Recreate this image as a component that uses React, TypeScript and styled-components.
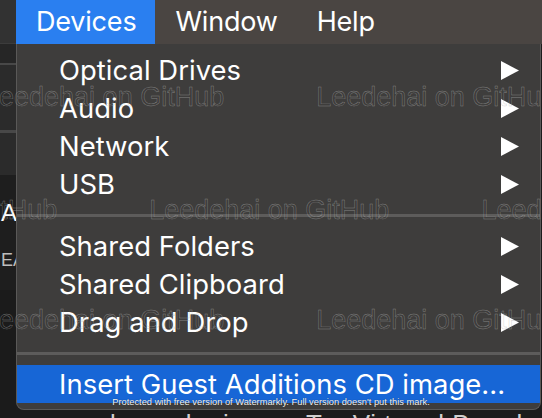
import React from "react";
import styled, { createGlobalStyle } from "styled-components";

const Global = createGlobalStyle`
  html, body { margin: 0; padding: 0; background: #1c1c1c; }
  body { width: 542px; height: 418px; overflow: hidden; }
`;

const Page = styled.div`
  position: relative;
  width: 542px;
  height: 418px;
  overflow: hidden;
  display: grid;
  grid-template-columns: 16px 525px 1px;
  grid-template-rows: 44px 366px 1fr;
  background: #1c1c1c;
  font-family: Inter, "Noto Sans", sans-serif;
`;

const SideTop = styled.div`
  grid-column: 1;
  grid-row: 1;
  background: #323232;
  border-bottom: 1px solid #3c3c3c;
  box-sizing: border-box;
`;

const MenuBar = styled.nav`
  grid-column: 2 / -1;
  grid-row: 1;
  display: flex;
  align-items: stretch;
  background: #4a4542;
`;

const BarItem = styled.div<{ $active?: boolean }>`
  padding: 0 19px 0 20px;
  line-height: 44px;
  font-size: 27px;
  color: #ffffff;
  background: ${(p) => (p.$active ? "#2a7ff0" : "transparent")};
  letter-spacing: -0.2px;
`;

const SideStrip = styled.div`
  grid-column: 1;
  grid-row: 2;
  display: flex;
  flex-direction: column;
  overflow: hidden;
`;

const SideBlock = styled.div<{ $h: number; $bg: string }>`
  flex: 0 0 ${(p) => p.$h}px;
  background: ${(p) => p.$bg};
  position: relative;
  overflow: hidden;
`;

const SideLetter = styled.div<{ $size: number; $color: string; $pad: number }>`
  padding-top: ${(p) => p.$pad}px;
  padding-left: 1px;
  font-family: "Liberation Sans", Arial, sans-serif;
  font-size: ${(p) => p.$size}px;
  line-height: 1;
  color: ${(p) => p.$color};
  white-space: nowrap;
`;

const RightEdge = styled.div`
  grid-column: 3;
  grid-row: 2;
  background: #1c1c1c;
`;

const Dropdown = styled.div`
  grid-column: 2;
  grid-row: 2;
  box-sizing: border-box;
  background: #3e3d3c;
  border: 1px solid #5a5958;
  border-top: none;
  border-radius: 0 0 8px 8px;
  padding: 7px 0 6px 0;
  display: flex;
  flex-direction: column;
  overflow: hidden;
`;

const Item = styled.div<{ $active?: boolean }>`
  height: 38px;
  flex: 0 0 38px;
  display: flex;
  align-items: center;
  justify-content: space-between;
  padding: 0 21px 0 42px;
  font-size: 27.4px;
  line-height: 38px;
  color: #ffffff;
  background: ${(p) => (p.$active ? "#1766d6" : "transparent")};
  letter-spacing: 0.05px;
`;

const Separator = styled.div`
  flex: 0 0 24px;
  display: flex;
  align-items: center;
  &::after {
    content: "";
    display: block;
    width: 100%;
    height: 3px;
    background: #5d5c5b;
  }
`;

const Arrow = () => (
  <svg width="18" height="19" viewBox="0 0 18 19" aria-hidden>
    <polygon points="0,0 18,9.5 0,19" fill="#ffffff" />
  </svg>
);

const BottomStrip = styled.div`
  grid-column: 1 / -1;
  grid-row: 3;
  background: #1c1c1c;
  overflow: hidden;
  position: relative;
`;

const BottomText = styled.div`
  margin-top: 1px;
  padding-left: 110px;
  font-family: "Liberation Sans", Arial, sans-serif;
  font-size: 26px;
  line-height: 26px;
  color: #cfcfcf;
  white-space: pre;
  letter-spacing: 0.5px;
`;

const MarkLayer = styled.div`
  position: absolute;
  inset: 0;
  pointer-events: none;
`;

const MarkRow = styled.div<{ $top: number; $left: number }>`
  position: absolute;
  top: ${(p) => p.$top}px;
  left: ${(p) => p.$left}px;
  display: flex;
  gap: 92px;
  white-space: nowrap;
  font-family: "Liberation Sans", Arial, sans-serif;
  font-size: 27px;
  line-height: 31px;
  color: transparent;
  -webkit-text-stroke: 0.45px rgba(175, 175, 175, 0.6);
`;

const Notice = styled.div`
  position: absolute;
  left: 0;
  right: 0;
  top: 397px;
  text-align: center;
  font-family: "Liberation Sans", Arial, sans-serif;
  font-size: 9.3px;
  line-height: 11px;
  color: #f2f2f2;
  text-shadow: 0 0 1px rgba(0, 0, 0, 0.6);
  pointer-events: none;
`;

const groupA = ["Optical Drives", "Audio", "Network", "USB"];
const groupB = ["Shared Folders", "Shared Clipboard", "Drag and Drop"];

const mark = "Leedehai on GitHub";

export default function App() {
  return (
    <>
      <Global />
      <Page>
        <SideTop />
        <MenuBar>
          <BarItem $active>Devices</BarItem>
          <BarItem>Window</BarItem>
          <BarItem>Help</BarItem>
        </MenuBar>

        <SideStrip>
          <SideBlock $h={19} $bg="#262626" />
          <SideBlock $h={2} $bg="#484848" />
          <SideBlock $h={65} $bg="#2b2b2b" />
          <SideBlock $h={3} $bg="#484848" />
          <SideBlock $h={42} $bg="#2b2b2b" />
          <SideBlock $h={115} $bg="#1e1e1e">
            <SideLetter $size={24} $color="#ffffff" $pad={26}>A</SideLetter>
            <SideLetter $size={18} $color="#bdbdbd" $pad={26}>EA</SideLetter>
          </SideBlock>
          <SideBlock $h={120} $bg="#1b1b1b" />
        </SideStrip>

        <Dropdown>
          {groupA.map((label) => (
            <Item key={label}>
              <span>{label}</span>
              <Arrow />
            </Item>
          ))}
          <Separator />
          {groupB.map((label) => (
            <Item key={label}>
              <span>{label}</span>
              <Arrow />
            </Item>
          ))}
          <Separator />
          <Item $active>
            <span>Insert Guest Additions CD image...</span>
          </Item>
        </Dropdown>
        <RightEdge />

        <BottomStrip>
          <BottomText>{"l         l    i          T    Vi t      l B      l     UT"}</BottomText>
        </BottomStrip>

        <MarkLayer>
          <MarkRow $top={82} $left={-16}>
            <span>{mark}</span>
            <span>{mark}</span>
          </MarkRow>
          <MarkRow $top={195} $left={-183}>
            <span>{mark}</span>
            <span>{mark}</span>
            <span>{mark}</span>
          </MarkRow>
          <MarkRow $top={305} $left={-16}>
            <span>{mark}</span>
            <span>{mark}</span>
          </MarkRow>
        </MarkLayer>

        <Notice>
          Protected with free version of Watermarkly. Full version doesn't put this mark.
        </Notice>
      </Page>
    </>
  );
}
